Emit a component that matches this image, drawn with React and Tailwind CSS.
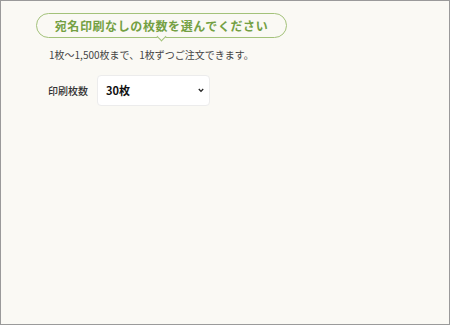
import React, { useState } from "react"

const jp = { fontFamily: '"Noto Sans CJK JP", "Noto Sans", sans-serif' }

export default function App() {
    const [count, setCount] = useState("30")

    return (
        <div style={jp} className="w-[450px] h-[325px] bg-[#faf9f4] border border-[#9a9a9a] box-border">
            <div className="pl-[35px] pt-[12px]">
                <div className="relative w-[251px]">
                    <h2 className="h-[25px] rounded-full border border-[#a3c27a] bg-[#faf9f4] flex items-center justify-center text-[12px] font-bold text-[#74a043] tracking-[0.6px] leading-none">
                        宛名印刷なしの枚数を選んでください
                    </h2>
                    <span className="absolute left-[122px] top-[20px] w-[7px] h-[7px] rotate-45 bg-[#faf9f4] border-r border-b border-[#a3c27a]"></span>
                </div>
                <p className="mt-[10px] ml-[13px] text-[10px] leading-[14px] text-[#444]">1枚〜1,500枚まで、1枚ずつご注文できます。</p>
                <div className="mt-[13px] ml-[12px] flex items-center gap-[9px]">
                    <label className="text-[10px] font-medium text-[#333]">印刷枚数</label>
                    <div className="relative">
                        <select
                            value={count}
                            onChange={e => setCount(e.target.value)}
                            style={jp}
                            className="appearance-none w-[113px] h-[31px] bg-white border border-[#ececec] rounded-[4px] pl-[8px] text-[11px] font-bold text-[#111] outline-none"
                        >
                            <option value="10">10枚</option>
                            <option value="20">20枚</option>
                            <option value="30">30枚</option>
                            <option value="50">50枚</option>
                        </select>
                        <svg className="absolute right-[6px] top-[13px] pointer-events-none" width="6" height="5" viewBox="0 0 6 5">
                            <path d="M0.8 1 L3 3.4 L5.2 1" fill="none" stroke="#222" strokeWidth="1.3" />
                        </svg>
                    </div>
                </div>
            </div>
        </div>
    )
}
